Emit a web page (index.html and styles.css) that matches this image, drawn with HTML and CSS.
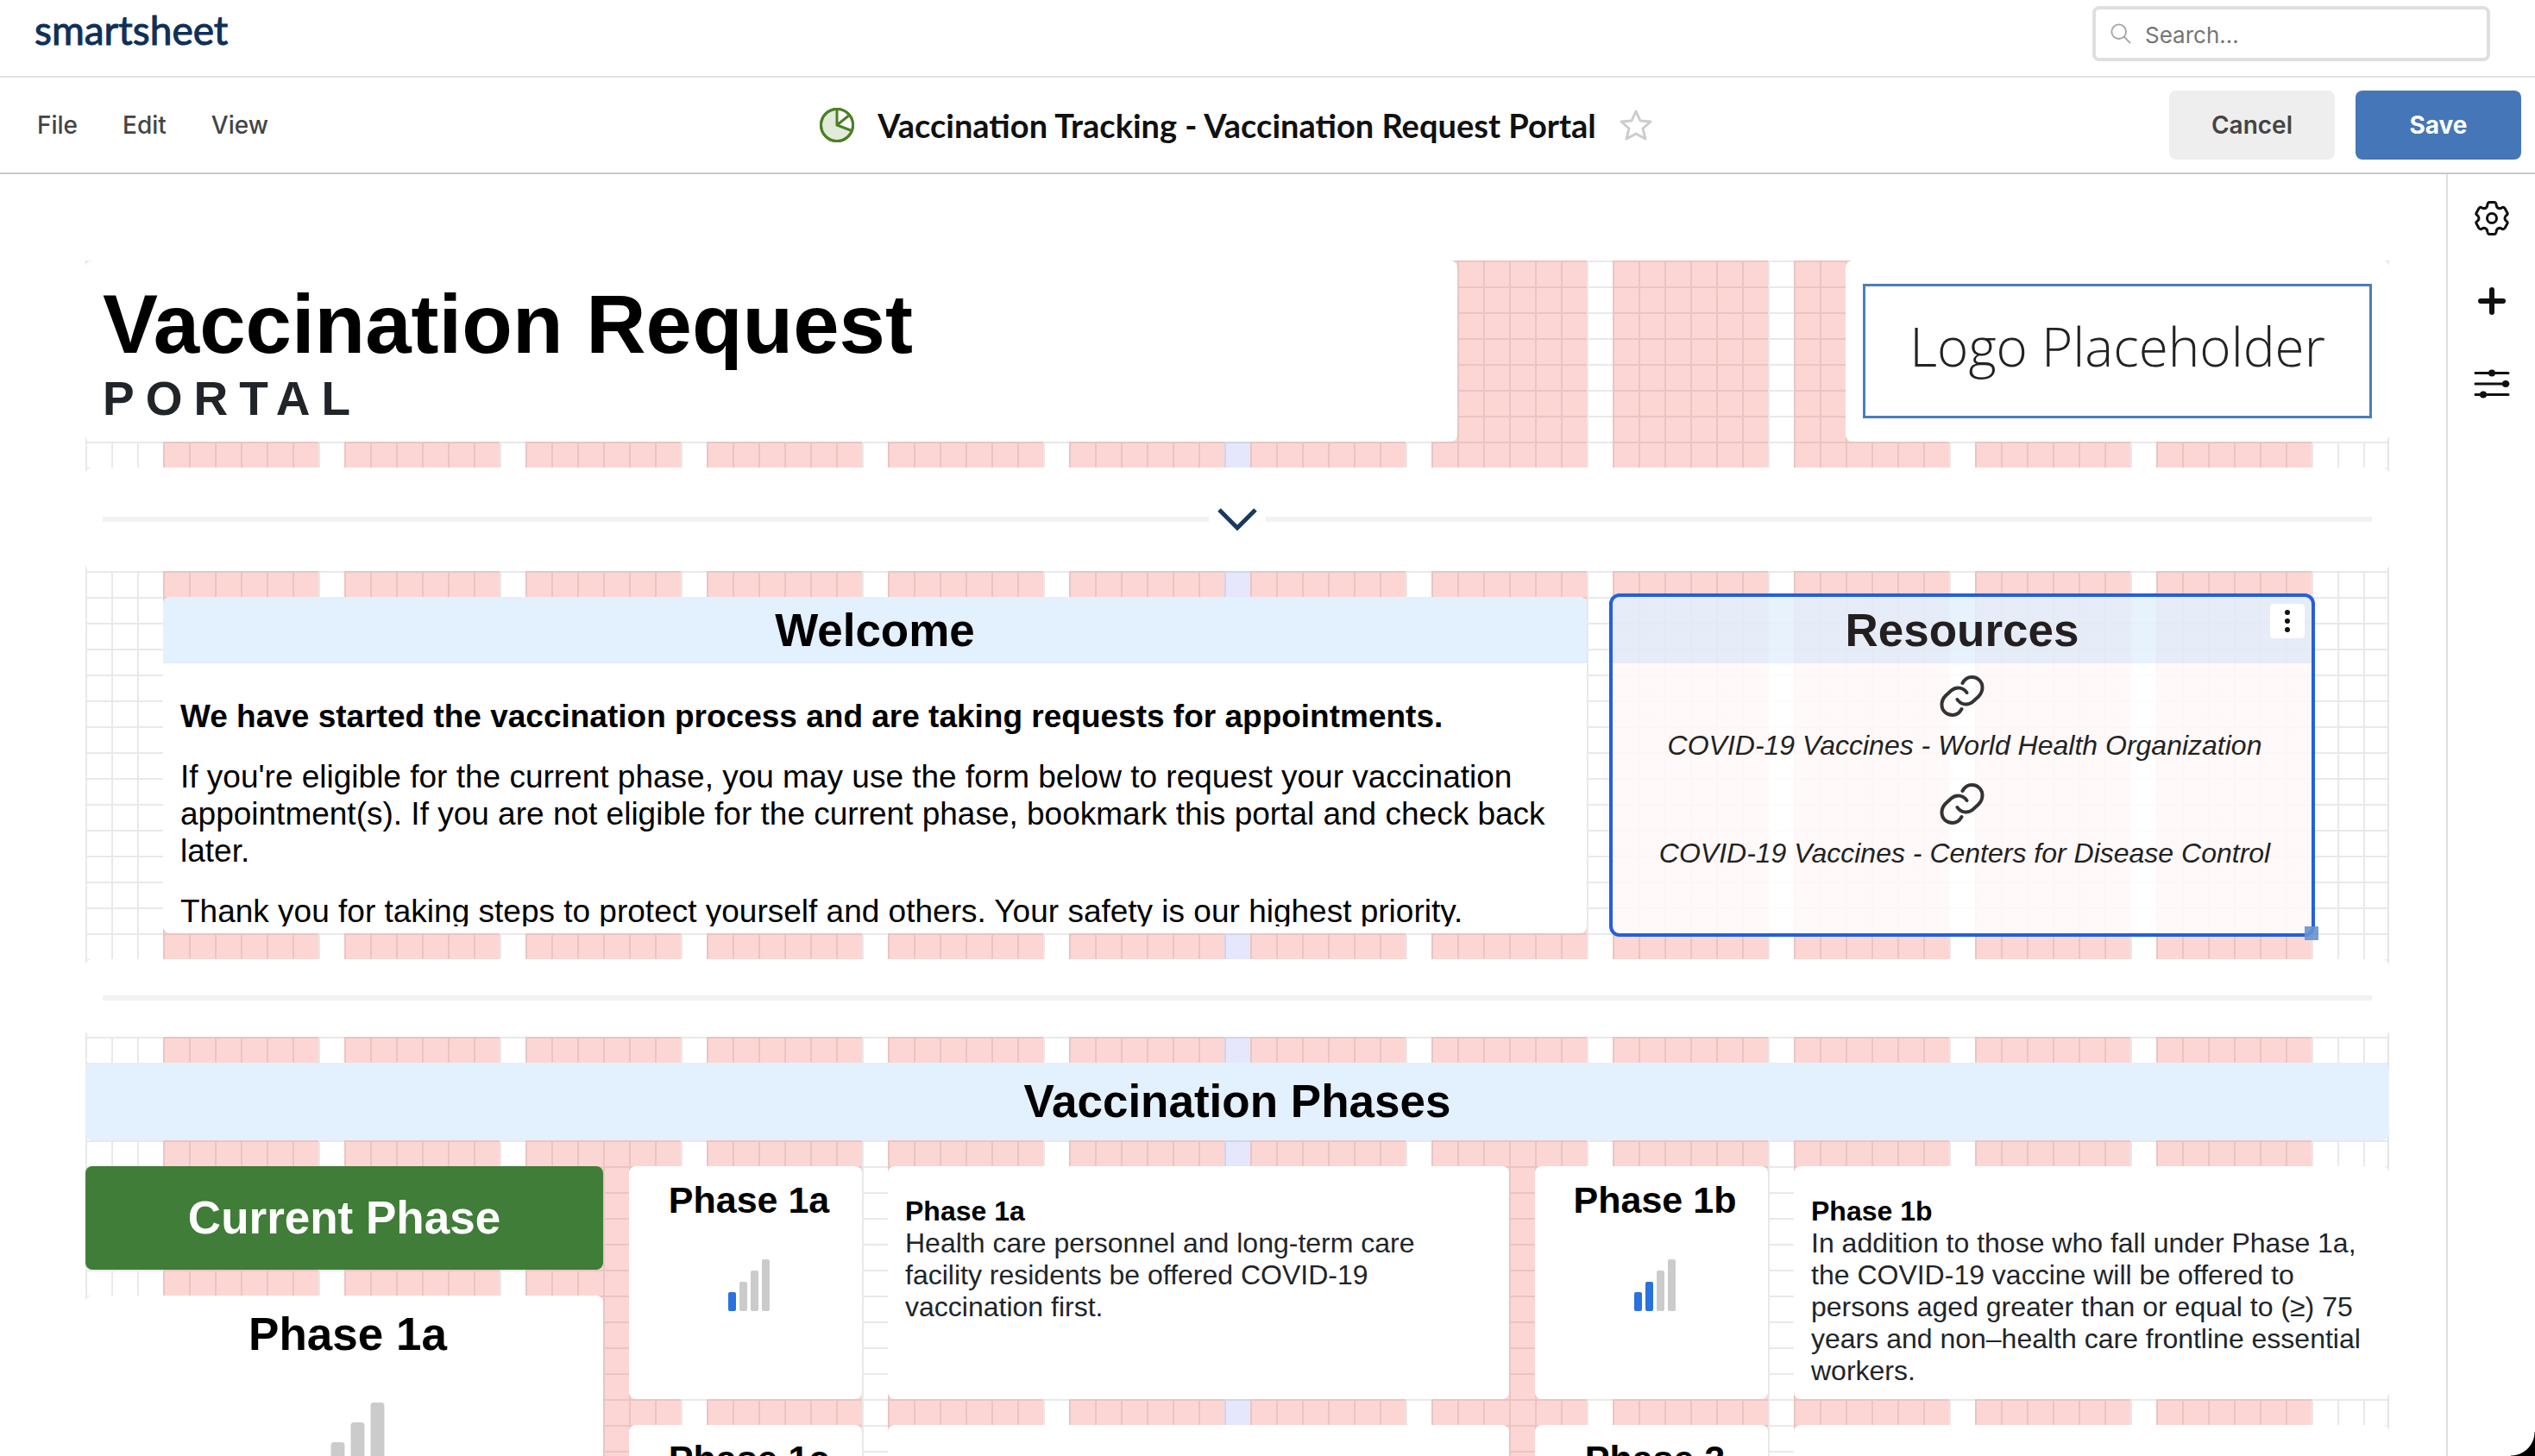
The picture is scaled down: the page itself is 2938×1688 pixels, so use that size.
FILE: index.html
```html
<!DOCTYPE html>
<html lang="en">
<head>
<meta charset="utf-8">
<title>Vaccination Tracking - Vaccination Request Portal</title>
<link rel="stylesheet" href="styles.css">
</head>
<body>
<header class="topbar">
  <a class="brand" href="#">smartsheet</a>
  <label class="search">
    <svg class="search-icon" viewBox="0 0 26 26" aria-hidden="true"><circle cx="10.500" cy="10.500" r="9"/><path d="M17 17l8 8"/></svg>
    <input type="search" placeholder="Search..." aria-label="Search">
  </label>
</header>
<div class="toolbar">
  <nav class="menu">
    <button type="button">File</button>
    <button type="button">Edit</button>
    <button type="button">View</button>
  </nav>
  <div class="doc">
    <svg class="pie" viewBox="0 0 40 40" aria-hidden="true"><circle class="pie-fill" cx="20" cy="20" r="18.500"/><path class="pie-cut" d="M20 20V1.500A18.500 18.500 0 0 1 37 27Z"/><circle cx="20" cy="20" r="18.500"/><path d="M20 2V20L37 26.500M20 20L35 8"/></svg>
    <h1 class="doc-title">Vaccination Tracking - Vaccination Request Portal</h1>
    <button class="star" type="button" aria-label="Favorite"><svg viewBox="0 0 38 38"><path d="M19 3l5 11 12 1-9 8 3 12-11-6-11 6 3-12-9-8 12-1z"/></svg></button>
  </div>
  <div class="actions">
    <button class="btn btn-cancel" type="button">Cancel</button>
    <button class="btn btn-save" type="button">Save</button>
  </div>
</div>
<div class="workspace">
  <main class="canvas">
    <div class="board">
      <section class="widget heading-widget">
        <h2 class="portal-title">Vaccination Request</h2>
        <p class="portal-sub">PORTAL</p>
      </section>
      <section class="widget logo-widget"><div class="logo-box">Logo Placeholder</div></section>
      <div class="widget divider-a">
        <span class="rule"></span>
        <svg class="chevron" viewBox="0 0 46 28" aria-hidden="true"><path d="M2 3l21 21 21-21"/></svg>
        <span class="rule"></span>
      </div>
      <section class="widget welcome">
        <h2 class="band">Welcome</h2>
        <div class="welcome-body">
          <p><strong>We have started the vaccination process and are taking requests for appointments.</strong></p>
          <p>If you're eligible for the current phase, you may use the form below to request your vaccination appointment(s). If you are not eligible for the current phase, bookmark this portal and check back later.</p>
          <p>Thank you for taking steps to protect yourself and others. Your safety is our highest priority.</p>
        </div>
      </section>
      <section class="widget resources">
        <h2 class="band">Resources</h2>
        <button class="more" type="button" aria-label="Widget menu"><svg viewBox="0 0 8 28"><circle cx="4" cy="4" r="3"/><circle cx="4" cy="14" r="3"/><circle cx="4" cy="24" r="3"/></svg></button>
        <div class="links">
          <a href="#"><svg class="link-icon" viewBox="0 0 50 48"><path d="M25.500 9C28 4.500 31.500 2 36 2C43 2 48.500 7 48.500 14C48.500 18.500 47 21.500 44 24.500L37.500 30.500C31.500 35.500 23.500 34 19.500 28M24.500 39C22 43.500 18.500 46 14 46C7 46 1.500 41 1.500 34C1.500 29.500 3 26.500 6 23.500L12.500 17.500C18.500 12.500 26.500 14 30.500 20"/></svg>COVID-19 Vaccines - World Health Organization</a>
          <a href="#"><svg class="link-icon" viewBox="0 0 50 48"><path d="M25.500 9C28 4.500 31.500 2 36 2C43 2 48.500 7 48.500 14C48.500 18.500 47 21.500 44 24.500L37.500 30.500C31.500 35.500 23.500 34 19.500 28M24.500 39C22 43.500 18.500 46 14 46C7 46 1.500 41 1.500 34C1.500 29.500 3 26.500 6 23.500L12.500 17.500C18.500 12.500 26.500 14 30.500 20"/></svg>COVID-19 Vaccines - Centers for Disease Control</a>
        </div>
        <span class="handle"></span>
      </section>
      <div class="widget divider-b"><span class="rule"></span></div>
      <h2 class="widget phases-band">Vaccination Phases</h2>
      <h2 class="widget current">Current Phase</h2>
      <section class="widget current-card">
        <h3>Phase 1a</h3>
        <svg class="bars bars-lg" viewBox="0 0 52 60" aria-hidden="true"><rect class="on" x="2" y="38" width="9" height="22" rx="2"/><rect x="15" y="26" width="9" height="34" rx="2"/><rect x="28" y="13" width="9" height="47" rx="2"/><rect x="41" y="0" width="9" height="60" rx="2"/></svg>
      </section>
      <section class="widget phase card-a">
        <h3>Phase 1a</h3>
        <svg class="bars" viewBox="0 0 52 60" aria-hidden="true"><rect class="on" x="2" y="38" width="9" height="22" rx="2"/><rect x="15" y="26" width="9" height="34" rx="2"/><rect x="28" y="13" width="9" height="47" rx="2"/><rect x="41" y="0" width="9" height="60" rx="2"/></svg>
      </section>
      <section class="widget text-a copy">
        <h4>Phase 1a</h4>
        <p>Health care personnel and long-term care facility residents be offered COVID-19 vaccination first.</p>
      </section>
      <section class="widget phase card-b">
        <h3>Phase 1b</h3>
        <svg class="bars" viewBox="0 0 52 60" aria-hidden="true"><rect class="on" x="2" y="38" width="9" height="22" rx="2"/><rect class="on" x="15" y="26" width="9" height="34" rx="2"/><rect x="28" y="13" width="9" height="47" rx="2"/><rect x="41" y="0" width="9" height="60" rx="2"/></svg>
      </section>
      <section class="widget text-b copy">
        <h4>Phase 1b</h4>
        <p>In addition to those who fall under Phase 1a, the COVID-19 vaccine will be offered to persons aged greater than or equal to (≥) 75 years and non–health care frontline essential workers.</p>
      </section>
      <section class="widget phase card-c"><h3>Phase 1c</h3></section>
      <section class="widget text-c"></section>
      <section class="widget phase card-d"><h3>Phase 2</h3></section>
      <section class="widget text-d"></section>
    </div>
  </main>
  <aside class="rail">
    <button type="button" aria-label="Settings"><svg viewBox="0 0 40 40"><path d="M17 1.500h6q1.500 0 2 2.500q.5 4 3 4.500t4-1q2-.5 3 1l3 5.500q.7 1.500-1 2.500q-2 1.500-2 3.500t2 3.500q1.700 1 1 2.500l-3 5.500q-1 1.500-3 1q-1.500-1.500-4-1t-3 4.500q-.5 2.500-2 2.500h-6q-1.500 0-2-2.500q-.5-4-3-4.500t-4 1q-2 .5-3-1l-3-5.500q-.7-1.500 1-2.500q2-1.500 2-3.500t-2-3.500q-1.700-1-1-2.500l3-5.500q1-1.500 3-1q1.500 1.500 4 1t3-4.500q.5-2.500 2-2.500z"/><circle cx="20" cy="20" r="5.500"/></svg></button>
    <button type="button" aria-label="Add"><svg viewBox="0 0 40 40"><path class="plus" d="M20 7v26M7 20h26"/></svg></button>
    <button type="button" aria-label="Filters"><svg viewBox="0 0 40 40"><path d="M1 7.500h38M1 20h38M1 32.500h38"/><circle class="dot" cx="20" cy="7.500" r="4"/><circle class="dot" cx="36" cy="20" r="4"/><circle class="dot" cx="10" cy="32.500" r="4"/></svg></button>
  </aside>
</div>
<span class="corner"></span>
</body>
</html>
```
FILE: styles.css
```css
* { box-sizing: border-box; }
html, body { height: 100%; }
body {
  margin: 0;
  display: flex;
  flex-direction: column;
  overflow: hidden;
  background: #fff;
  color: #000;
  font-family: "Liberation Sans", Arial, sans-serif;
}
h1, h2, h3, h4, p { margin: 0; }
button { font: inherit; border: 0; background: none; padding: 0; color: inherit; }
svg { display: block; fill: none; overflow: visible; }

.topbar {
  flex: none;
  display: flex;
  justify-content: space-between;
  height: 90px;
  padding: 7px 52px 0 40px;
  border-bottom: 2px solid #e0e0e0;
}
.brand {
  font-family: Lato, sans-serif;
  font-size: 46px;
  line-height: 56px;
  color: #0f3057;
  -webkit-text-stroke: 1px #0f3057;
  text-decoration: none;
}
.search {
  display: flex;
  align-items: center;
  gap: 16px;
  width: 461px;
  height: 64px;
  padding: 0 17px;
  border: 4px solid #dfdfdf;
  border-radius: 8px;
}
.search-icon { width: 24px; height: 24px; stroke: #a3a3a3; stroke-width: 2; }
.search input {
  flex: 1;
  min-width: 0;
  border: 0;
  padding: 2px 0 0;
  outline: 0;
  background: none;
  font: 26px Inter, sans-serif;
}
.search input::placeholder { color: #757575; opacity: 1; }

.toolbar {
  flex: none;
  display: flex;
  align-items: center;
  height: 112px;
  padding: 0 16px 0 43px;
  border-bottom: 2px solid #c9c9c9;
}
.menu { display: flex; gap: 52px; font: 500 28px Inter, sans-serif; color: #444; }
.doc { flex: 1; display: flex; align-items: center; justify-content: center; gap: 27px; padding-left: 40px; }
.pie { width: 40px; height: 40px; stroke: #4c8023; stroke-width: 3; }
.pie-fill { fill: #e2ead9; }
.pie-cut { fill: #fff; stroke: none; }
.doc-title { font: 700 38px/48px Lato, sans-serif; color: #111; }
.star svg { width: 38px; height: 38px; stroke: #ccc; stroke-width: 3; stroke-linejoin: round; }
.actions { display: flex; justify-content: flex-end; gap: 24px; }
.btn { width: 192px; height: 80px; border-radius: 8px; font: 600 28px Inter, sans-serif; }
.btn-cancel { background: #eee; color: #444; }
.btn-save { background: #4576b7; color: #fff; font-weight: 700; }

.workspace { flex: 1; min-height: 0; display: flex; }
.canvas { flex: 1; min-width: 0; padding: 100px 66px 0 99px; overflow: hidden; }
.board {
  position: relative;
  display: grid;
  grid-template-columns: repeat(89, minmax(0, 1fr));
  grid-auto-rows: 30px;
  grid-template-rows: repeat(54, 30px);
  background:
    linear-gradient(#e6e6e6, #e6e6e6) 100% 0 / 2px 100% no-repeat,
    linear-gradient(90deg, #e9e9e9 2px, transparent 2px) 0 0 / calc(100% / 89) 100%,
    linear-gradient(#e9e9e9 2px, transparent 2px) 0 0 / 100% 30px;
}
.board::before {
  content: "";
  position: absolute;
  inset: 0 calc(300% / 89);
  background:
    linear-gradient(90deg, transparent calc(4100% / 83), rgba(94, 104, 240, .16) 0 calc(4200% / 83), transparent 0),
    repeating-linear-gradient(90deg, rgba(240, 50, 38, .2) 0 calc(600% / 83), transparent 0 calc(700% / 83));
}
.widget { position: relative; background: #fff; border-radius: 8px; min-width: 0; }

.heading-widget { grid-column: 1 / span 53; grid-row: 1 / span 7; padding: 18px 20px; }
.portal-title { font-size: 96px; line-height: 112px; }
.portal-sub { font-size: 55px; line-height: 60px; font-weight: 700; letter-spacing: 13px; color: #212529; }
.logo-widget { grid-column: 69 / span 21; grid-row: 1 / span 7; padding: 27px 20px; display: flex; }
.logo-box {
  flex: 1;
  display: flex;
  align-items: center;
  justify-content: center;
  padding-bottom: 12px;
  border: 3px solid #4a7ebb;
  font: 300 62px/90px "Open Sans", sans-serif;
  color: #222;
}
.divider-a { grid-column: 1 / -1; grid-row: 9 / span 4; padding: 0 20px; display: flex; align-items: center; gap: 10px; }
.divider-b { grid-column: 1 / -1; grid-row: 28 / span 3; padding: 0 20px; display: flex; align-items: center; }
.rule { flex: 1; height: 6px; background: #f2f2f2; }
.chevron { width: 46px; height: 28px; stroke: #1a395f; stroke-width: 5; }

.welcome { grid-column: 4 / span 55; grid-row: 14 / span 13; overflow: hidden; }
.band { height: 77px; background: #e3f0fd; font-size: 53px; line-height: 77px; text-align: center; }
.welcome-body {
  height: 305px;
  padding: 40px 20px 0;
  overflow: hidden;
  font-size: 37px;
  line-height: 43px;
}
.welcome-body p + p { margin-top: 27px; }

.resources {
  grid-column: 60 / span 27;
  grid-row: 14 / span 13;
  background: linear-gradient(rgba(227, 240, 253, .86) 77px, rgba(255, 255, 255, .86) 77px);
  outline: 4px solid #245fdb;
}
.resources .band { background: none; color: #231f20; }
.more {
  position: absolute;
  top: 8px;
  right: 8px;
  width: 40px;
  height: 40px;
  border-radius: 4px;
  background: #fff;
}
.more svg { width: 8px; height: 28px; margin: 0 auto; fill: #111; }
.links { display: flex; flex-direction: column; gap: 24px; padding: 14px 0 0 6px; }
.links a {
  display: flex;
  flex-direction: column;
  align-items: center;
  gap: 13px;
  color: #222;
  text-decoration: none;
  font-size: 32px;
  line-height: 40px;
  font-style: italic;
}
.link-icon { width: 50px; height: 48px; margin-right: 6px; stroke: #333; stroke-width: 4; stroke-linecap: round; }
.handle { position: absolute; right: -8px; bottom: -8px; width: 16px; height: 16px; background: rgba(101, 146, 208, .9); }

.phases-band { grid-column: 1 / -1; grid-row: 32 / span 3; background: #e3f0fd; font-size: 53px; line-height: 90px; text-align: center; }
.current { grid-column: 1 / span 20; grid-row: 36 / span 4; background: #407d38; color: #fff; font-size: 53px; line-height: 120px; text-align: center; }
.current-card { grid-column: 1 / span 20; grid-row: 41 / span 12; padding: 15px 0 0 8px; text-align: center; }
.current-card h3 { font-size: 53px; line-height: 60px; }
.bars { display: block; width: 52px; height: 60px; margin: 40px auto 0; fill: #cbcbcb; }
.bars .on { fill: #2a71e0; }
.bars-lg { width: 92px; height: 106px; margin-top: 49px; }
.phase { padding: 10px 0 0 8px; text-align: center; }
.phase h3 { font-size: 43px; line-height: 58px; }
.card-a { grid-column: 22 / span 9; grid-row: 36 / span 9; }
.text-a { grid-column: 32 / span 24; grid-row: 36 / span 9; }
.card-b { grid-column: 57 / span 9; grid-row: 36 / span 9; }
.text-b { grid-column: 67 / span 23; grid-row: 36 / span 9; }
.card-c { grid-column: 22 / span 9; grid-row: 46 / span 9; }
.text-c { grid-column: 32 / span 24; grid-row: 46 / span 9; }
.card-d { grid-column: 57 / span 9; grid-row: 46 / span 9; }
.text-d { grid-column: 67 / span 23; grid-row: 46 / span 9; }
.copy { padding: 34px 20px 0; font-size: 32px; line-height: 37px; color: #212529; }
.copy h4 { font-size: 32px; color: #000; }

.rail {
  flex: none;
  width: 103px;
  display: flex;
  flex-direction: column;
  align-items: center;
  gap: 56px;
  padding-top: 31px;
  border-left: 2px solid #dfdfdf;
}
.rail button { width: 40px; height: 40px; }
.rail svg { width: 40px; height: 40px; stroke: #111; stroke-width: 3; stroke-linejoin: round; stroke-linecap: round; }
.rail .plus { stroke-width: 6; }
.rail .dot { fill: #111; stroke: none; }
.corner {
  position: fixed;
  right: 0;
  bottom: 0;
  width: 28px;
  height: 28px;
  background: radial-gradient(circle at 0 0, transparent 27px, #000 28px);
}
```
